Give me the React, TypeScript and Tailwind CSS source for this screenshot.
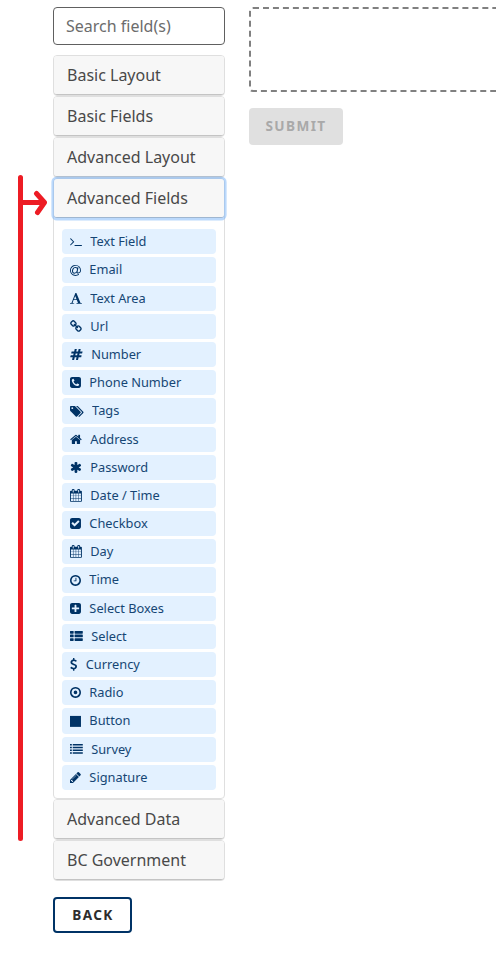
import React from "react";

const SQUARE =
  "M1664 416v960q0 119-84.5 203.5t-203.5 84.5h-960q-119 0-203.5-84.5t-84.5-203.5v-960q0-119 84.5-203.5t203.5-84.5h960q119 0 203.5 84.5t84.5 203.5z";
const RING =
  "M1440 896q0-148-73-273t-198-198-273-73-273 73-198 198-73 273 73 273 198 198 273 73 273-73 198-198 73-273zm224 0q0 209-103 385.5t-279.5 279.5-385.5 103-385.5-103-279.5-279.5-103-385.5 103-385.5 279.5-279.5 385.5-103 385.5 103 279.5 279.5 103 385.5z";
const CALENDAR =
  "M192 1664h288v-288h-288v288zm352 0h320v-288h-320v288zm-352-352h288v-320h-288v320zm352 0h320v-320h-320v320zm-352-384h288v-288h-288v288zm736 736h320v-288h-320v288zm-384-736h320v-288h-320v288zm768 736h288v-288h-288v288zm-384-352h320v-320h-320v320zm-352-864v-288q0-13-9.5-22.5t-22.5-9.5h-64q-13 0-22.5 9.5t-9.5 22.5v288q0 13 9.5 22.5t22.5 9.5h64q13 0 22.5-9.5t9.5-22.5zm736 864h288v-320h-288v320zm-384-384h320v-288h-320v288zm384 0h288v-288h-288v288zm32-480v-288q0-13-9.5-22.5t-22.5-9.5h-64q-13 0-22.5 9.5t-9.5 22.5v288q0 13 9.5 22.5t22.5 9.5h64q13 0 22.5-9.5t9.5-22.5zm384-64v1280q0 52-38 90t-90 38h-1408q-52 0-90-38t-38-90v-1280q0-52 38-90t90-38h128v-96q0-66 47-113t113-47h64q66 0 113 47t47 113v96h384v-96q0-66 47-113t113-47h64q66 0 113 47t47 113v96h128q52 0 90 38t38 90z";

type Field = { label: string; x: number; y?: number; w: number; d: string };

const fields: Field[] = [
  { label: "Text Field", x: 64, w: 1664, d: "M649 983l-466 466q-10 10-23 10t-23-10l-50-50q-10-10-10-23t10-23l393-393-393-393q-10-10-10-23t10-23l50-50q10-10 23-10t23 10l466 466q10 10 10 23t-10 23zm1079 457v64q0 14-9 23t-23 9h-960q-14 0-23-9t-9-23v-64q0-14 9-23t23-9h960q14 0 23 9t9 23z" },
  { label: "Email", x: 0, y: -128, w: 1536, d: "M972 647q0-108-53.5-169t-147.5-61q-63 0-124 30.5t-110 84.5-79.5 137-30.5 180q0 112 53.5 173t150.5 61q96 0 176-66.5t122.5-166 42.5-203.5zm564 121q0 111-37 197t-98.5 135-131.5 74.5-145 27.5q-6 0-15.5.5t-16.5.5q-95 0-142-53-28-33-33-83-52 66-131.5 110t-173.5 44q-161 0-249.5-95.5t-88.5-269.5q0-157 66-290t179-210.5 246-77.5q87 0 155 35.5t106 99.5l2-19 11-56q1-6 5.5-12t9.5-6h118q5 0 13 11 5 5 3 16l-120 614q-5 24-5 48 0 39 12.5 52t44.5 13q28-1 57-5.5t73-24 77-50 57-89.5 24-137q0-292-174-466t-466-174q-130 0-248.5 51t-204 136.5-136.5 204-51 248.5 51 248.5 136.5 204 204 136.5 248.5 51q228 0 405-144 11-9 24-8t21 12l41 49q8 12 7 24-2 13-12 22-102 83-227.5 128t-258.5 45q-156 0-298-61t-245-163-163-245-61-298 61-298 163-245 245-163 298-61q344 0 556 212t212 556z" },
  { label: "Text Area", x: 64, w: 1664, d: "M789 559l-170 450q33 0 136.5 2t160.5 2q19 0 57-2-87-253-184-452zm-725 1105l2-79q23-7 56-12.5t57-10.5 49.5-14.5 44.5-29 31-50.5l237-616 280-724h128q8 14 11 21l205 480q33 78 106 257.5t114 274.5q15 34 58 144.5t72 168.5q20 45 35 57 19 15 88 29.5t84 20.5q6 38 6 57 0 5-.5 13.5t-.5 12.5q-63 0-190-8t-191-8q-76 0-215 7t-178 8q0-43 4-78l131-28q1 0 12.5-2.5t15.5-3.5 14.5-4.5 15-6.5 11-8 9-11 2.5-14q0-16-31-96.5t-72-177.5-42-100l-450-2q-26 58-76.5 195.5t-50.5 162.5q0 22 14 37.5t43.5 24.5 48.5 13.5 57 8.5 41 4q1 19 1 58 0 9-2 27-58 0-174.5-10t-174.5-10q-8 0-26.5 4t-21.5 4q-80 14-188 14z" },
  { label: "Url", x: 64, w: 1664, d: "M1520 1216q0-40-28-68l-208-208q-28-28-68-28-42 0-72 32 3 3 19 18.5t21.5 21.5 15 19 13 25.5 3.5 27.5q0 40-28 68t-68 28q-15 0-27.5-3.5t-25.5-13-19-15-21.5-21.5-18.5-19q-33 31-33 73 0 40 28 68l206 207q27 27 68 27 40 0 68-26l147-146q28-28 28-67zm-703-705q0-40-28-68l-206-207q-28-28-68-28-39 0-68 27l-147 146q-28 28-28 67 0 40 28 68l208 208q27 27 68 27 42 0 72-31-3-3-19-18.5t-21.5-21.5-15-19-13-25.5-3.5-27.5q0-40 28-68t68-28q15 0 27.5 3.5t25.5 13 19 15 21.5 21.5 18.5 19q33-31 33-73zm895 705q0 120-85 203l-147 146q-83 83-203 83-121 0-204-85l-206-207q-83-83-83-203 0-123 88-209l-88-88q-86 88-208 88-120 0-204-84l-208-208q-84-84-84-204t85-203l147-146q83-83 203-83 121 0 204 85l206 207q83 83 83 203 0 123-88 209l88 88q86-88 208-88 120 0 204 84l208 208q84 84 84 204z" },
  { label: "Number", x: 0, w: 1792, d: "M991 1024l64-256h-254l-64 256h254zm768-504l-56 224q-7 24-31 24h-327l-64 256h311q15 0 25 12 10 14 6 28l-56 224q-5 24-31 24h-327l-81 328q-7 24-31 24h-224q-16 0-26-12-9-12-6-28l78-312h-254l-81 328q-7 24-31 24h-225q-15 0-25-12-9-12-6-28l78-312h-311q-15 0-25-12-9-12-6-28l56-224q7-24 31-24h327l64-256h-311q-15 0-25-12-10-14-6-28l56-224q5-24 31-24h327l81-328q7-24 32-24h224q15 0 25 12 9 12 6 28l-78 312h254l81-328q7-24 32-24h224q15 0 25 12 9 12 6 28l-78 312h311q15 0 25 12 9 12 6 28z" },
  { label: "Phone Number", x: 128, w: 1536, d: "M1408 1193q0-11-2-16t-18-16.5-40.5-25-47.5-26.5-45.5-25-28.5-15q-5-3-19-13t-25-15-21-5q-15 0-36.5 20.5t-39.5 45-38.5 45-33.5 20.5q-7 0-16.5-3.5t-15.5-6.5-17-9.5-14-8.5q-99-55-170-126.5t-127-170.5q-2-3-8.5-14t-9.5-17-6.5-15.5-3.5-16.5q0-13 20.5-33.5t45-38.5 45-39.5 20.5-36.5q0-10-5-21t-15-25-13-19q-3-6-15-28.5t-25-45.5-26.5-47.5-25-40.5-16.5-18-16-2q-48 0-101 22-46 21-80 94.5t-34 130.5q0 16 2.5 34t5 30.5 9 33 10 29.5 12.5 33 11 30q60 164 216.5 320.5t320.5 216.5q6 2 30 11t33 12.5 29.5 10 33 9 30.5 5 34 2.5q57 0 130.5-34t94.5-80q22-53 22-101z" + SQUARE },
  { label: "Tags", x: 128, w: 1920, d: "M576 448q0-53-37.5-90.5t-90.5-37.5-90.5 37.5-37.5 90.5 37.5 90.5 90.5 37.5 90.5-37.5 37.5-90.5zm1067 576q0 53-37 90l-491 492q-39 37-91 37-53 0-90-37l-715-716q-38-37-64.5-101t-26.5-117v-416q0-52 38-90t90-38h416q53 0 117 26.5t102 64.5l715 714q37 39 37 91zm384 0q0 53-37 90l-491 492q-39 37-91 37-36 0-59-14t-53-45l470-470q37-37 37-90 0-52-37-91l-715-714q-38-38-102-64.5t-117-26.5h224q53 0 117 26.5t102 64.5l715 714q37 39 37 91z" },
  { label: "Address", x: 64, w: 1664, d: "M1472 992v480q0 26-19 45t-45 19h-384v-384h-256v384h-384q-26 0-45-19t-19-45v-480q0-1 .5-3t.5-3l575-474 575 474q1 2 1 6zm223-69l-62 74q-8 9-21 11h-3q-13 0-21-7l-692-577-692 577q-12 8-24 7-13-2-21-11l-62-74q-8-10-7-23.5t11-21.5l719-599q32-26 76-26t76 26l244 204v-195q0-14 9-23t23-9h192q14 0 23 9t9 23v408l219 182q10 8 11 21.5t-7 23.5z" },
  { label: "Password", x: 64, w: 1664, d: "M1546 1050q46 26 59.5 77.5t-12.5 97.5l-64 110q-26 46-77.5 59.5t-97.5-12.5l-266-153v307q0 52-38 90t-90 38h-128q-52 0-90-38t-38-90v-307l-266 153q-46 26-97.5 12.5t-77.5-59.5l-64-110q-26-46-12.5-97.5t59.5-77.5l266-154-266-154q-46-26-59.5-77.5t12.5-97.5l64-110q26-46 77.5-59.5t97.5 12.5l266 153v-307q0-52 38-90t90-38h128q52 0 90 38t38 90v307l266-153q46-26 97.5-12.5t77.5 59.5l64 110q26 46 12.5 97.5t-59.5 77.5l-266 154z" },
  { label: "Date / Time", x: 64, w: 1664, d: CALENDAR },
  { label: "Checkbox", x: 128, w: 1536, d: "M813 1299l614-614q19-19 19-45t-19-45l-102-102q-19-19-45-19t-45 19l-467 467-211-211q-19-19-45-19t-45 19l-102 102q-19 19-19 45t19 45l358 358q19 19 45 19t45-19z" + SQUARE },
  { label: "Day", x: 64, w: 1664, d: CALENDAR },
  { label: "Time", x: 128, w: 1536, d: "M1024 544v448q0 14-9 23t-23 9h-320q-14 0-23-9t-9-23v-64q0-14 9-23t23-9h224v-352q0-14 9-23t23-9h64q14 0 23 9t9 23z" + RING },
  { label: "Select Boxes", x: 128, w: 1536, d: "M1408 960v-128q0-26-19-45t-45-19h-320v-320q0-26-19-45t-45-19h-128q-26 0-45 19t-19 45v320h-320q-26 0-45 19t-19 45v128q0 26 19 45t45 19h320v320q0 26 19 45t45 19h128q26 0 45-19t19-45v-320h320q26 0 45-19t19-45z" + SQUARE },
  { label: "Select", x: 0, w: 1792, d: "M60 128h392l60 60v264l-60 60h-392l-60-60v-264zM700 128h1032l60 60v264l-60 60h-1032l-60-60v-264zM60 640h392l60 60v264l-60 60h-392l-60-60v-264zM700 640h1032l60 60v264l-60 60h-1032l-60-60v-264zM60 1152h392l60 60v264l-60 60h-392l-60-60v-264zM700 1152h1032l60 60v264l-60 60h-1032l-60-60v-264z" },
  { label: "Currency", x: 384, w: 1024, d: "M1362 1185q0 153-99.5 263.5t-258.5 136.5v175q0 14-9 23t-23 9h-135q-13 0-22.5-9.5t-9.5-22.5v-175q-66-9-127.5-31t-101.5-44.5-74-48-46.5-37.5-17.5-18q-17-21-2-41l103-135q7-10 23-12 15-2 24 9l2 2q113 99 243 125 37 8 74 8 81 0 142.5-43t61.5-122q0-28-15-53t-33.5-42-58.5-37.5-66-32-80-32.5q-39-16-61.5-25t-61.5-26.5-62.5-31-56.5-35.5-53.5-42.5-43.5-49-35.5-58-21-66.5-8.5-78q0-138 98-242t255-134v-180q0-13 9.5-22.5t22.5-9.5h135q14 0 23 9t9 23v176q57 6 110.5 23t87 33.5 63.5 37.5 39 29 15 14q17 18 5 38l-81 146q-8 15-23 16-14 3-27-7-3-3-14.5-12t-39-26.5-58.5-32-74.5-26-85.5-11.5q-95 0-155 43t-60 111q0 26 8.5 48t29.5 41.5 39.5 33 56 31 60.5 27 70 27.5q53 20 81 31.5t76 35 75.5 42.5 62 50 53 63.5 31.5 76.5 13 94z" },
  { label: "Radio", x: 128, w: 1536, d: "M1152 896a256 256 0 1 1-512 0 256 256 0 1 1 512 0z" + RING },
  { label: "Button", x: 128, w: 1536, d: "M128 128h1536v1536h-1536z" },
  { label: "Survey", x: 0, w: 1792, d: "M0 128h256v224h-256zM384 128h1408v224h-1408zM0 512h256v224h-256zM384 512h1408v224h-1408zM0 896h256v224h-256zM384 896h1408v224h-1408zM0 1280h256v224h-256zM384 1280h1408v224h-1408z" },
  { label: "Signature", x: 128, w: 1536, d: "M491 1536l91-91-235-235-91 91v107h128v128h107zm523-928q0-22-22-22-10 0-17 7l-542 542q-7 7-7 17 0 22 22 22 10 0 17-7l542-542q7-7 7-17zm-54-192l416 416-832 832h-416v-416zm683 96q0 53-37 90l-166 166-416-416 166-165q36-38 90-38 53 0 91 38l235 234q37 39 37 91z" },
];

function FieldRow({ field }: { field: Field }) {
  return (
    <button className="mb-[3px] flex h-[25.19px] w-full items-center rounded bg-[#e3f1ff] pl-2 text-left text-[12.8px] text-[#003366]">
      <svg
        className="mr-[8.4px] shrink-0 overflow-visible"
        width={(field.w / 1792) * 12.8}
        height={12.8}
        viewBox={`${field.x} ${field.y ?? 0} ${field.w} 1792`}
        fill="currentColor"
        fillRule="evenodd"
      >
        <path d={field.d} />
      </svg>
      <span className="opacity-90">{field.label}</span>
    </button>
  );
}

function Panel({ title, active, children }: { title: string; active?: boolean; children?: React.ReactNode }) {
  return (
    <section className="rounded border border-[#dfdfdf] bg-white">
      <button
        className={
          "flex h-[39px] w-full items-center rounded-[3px] border-b bg-[#f7f7f7] pl-[13px] text-left text-base text-[#494949] " +
          (active ? "border-[#9fb6d0] shadow-[0_0_0_2.6px_rgba(120,180,250,0.5)]" : "border-[#c4c4c4]")
        }
      >
        {title}
      </button>
      {children}
    </section>
  );
}

export default function App() {
  return (
    <main className="relative flex h-[959px] w-[496px] overflow-hidden bg-white font-['Noto_Sans',sans-serif]">
      <svg className="absolute top-0 left-0" width="52" height="850" fill="none" stroke="#ed1c24" strokeWidth="5" strokeLinecap="round" strokeLinejoin="round">
        <path d="M20.5 177.5V838.5M20.5 202.5H44M36.5 193.500L44.500 202.500L37.500 212.500" />
      </svg>
      <aside className="ml-[53px] w-[172px] shrink-0 pt-[7px]">
        <input
          placeholder="Search field(s)"
          className="mb-[10px] block h-[38px] w-full rounded border border-[#606060] pl-3 text-base placeholder:text-[#6c6c6c]"
        />
        <Panel title="Basic Layout" />
        <Panel title="Basic Fields" />
        <Panel title="Advanced Layout" />
        <Panel title="Advanced Fields" active>
          <div className="h-[580px] px-2 pt-[11.22px]">
            {fields.map((f) => (
              <FieldRow key={f.label} field={f} />
            ))}
          </div>
        </Panel>
        <Panel title="Advanced Data" />
        <Panel title="BC Government" />
        <button className="mt-4 flex h-9 w-[79px] items-center justify-center rounded border-2 border-[#003366] pl-px text-[13.6px] font-bold tracking-[1.4px] text-[#2d2d2d]">
          BACK
        </button>
      </aside>
      <section className="ml-6 w-[600px] shrink-0 pt-[7px]">
        <div className="h-[85px] rounded border-2 border-dashed border-[#808080]" />
        <button className="mt-4 flex h-[37px] w-[94px] items-center justify-center rounded bg-[#e0e0e0] text-[13.6px] font-bold tracking-[1.4px] text-[#a9a9a9]">
          SUBMIT
        </button>
      </section>
    </main>
  );
}
